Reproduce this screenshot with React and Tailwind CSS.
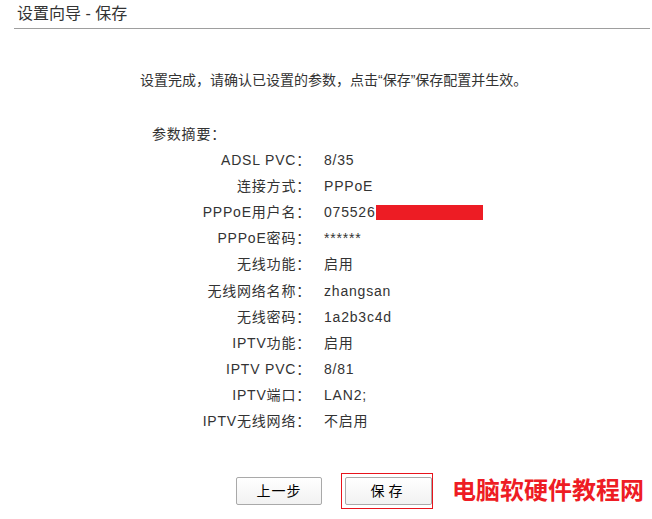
import React from 'react'

const filas = [
    ['ADSL PVC：', '8/35'],
    ['连接方式：', 'PPPoE'],
    ['PPPoE用户名：', '075526'],
    ['PPPoE密码：', '******'],
    ['无线功能：', '启用'],
    ['无线网络名称：', 'zhangsan'],
    ['无线密码：', '1a2b3c4d'],
    ['IPTV功能：', '启用'],
    ['IPTV PVC：', '8/81'],
    ['IPTV端口：', 'LAN2;'],
    ['IPTV无线网络：', '不启用'],
]

const App = () => {
    return (
        <div
            className="w-[652px] h-[519px] bg-white text-[#333] overflow-hidden"
            style={{ fontFamily: '"Liberation Sans", "Noto Sans CJK SC", sans-serif' }}
        >
            {/* Cabecera */}
            <div className="ml-[14px] mr-[2px] h-[29px] border-b border-[#9e9e9e] pl-[3px] text-[16px] leading-[28px] text-[#333]">
                设置向导 - 保存
            </div>

            {/* Texto */}
            <p className="mt-[41px] pl-[140px] text-[14px] leading-[20px]">
                设置完成，请确认已设置的参数，点击“保存”保存配置并生效。
            </p>

            <p className="mt-[34px] pl-[152px] text-[14px] leading-[20px] tracking-[0.8px]">参数摘要：</p>

            <div className="mt-[3px]">
                {filas.map(([label, valor], i) => (
                    <div key={i} className="flex h-[26.2px] items-center text-[14px] tracking-[0.8px]">
                        <div className="w-[311px] text-right whitespace-nowrap">{label}</div>
                        <div className="ml-[13px] flex items-center">
                            <span>{valor}</span>
                            {i === 2 && <span className="inline-block w-[107px] h-[15px] bg-[#ed1c24]" />}
                        </div>
                    </div>
                ))}
            </div>

            {/* Botones */}
            <div className="mt-[38px] flex items-center pl-[236px]">
                <button className="w-[86px] h-[28px] rounded-[2px] border border-[#a9a9a9] bg-gradient-to-b from-white to-[#f2f2f2] text-[14px] text-black tracking-[1px]">
                    上一步
                </button>
                <div className="ml-[19px] border border-[#e8141c] pl-[3px] py-[3px] pr-0">
                    <button className="w-[87px] h-[28px] rounded-[2px] border border-[#a9a9a9] bg-gradient-to-b from-white to-[#f2f2f2] text-[14px] text-black tracking-[4px]">
                        保存
                    </button>
                </div>
                <span className="ml-[19px] text-[24px] font-bold text-[#ee1c24] leading-none">电脑软硬件教程网</span>
            </div>
        </div>
    )
}

export default App
